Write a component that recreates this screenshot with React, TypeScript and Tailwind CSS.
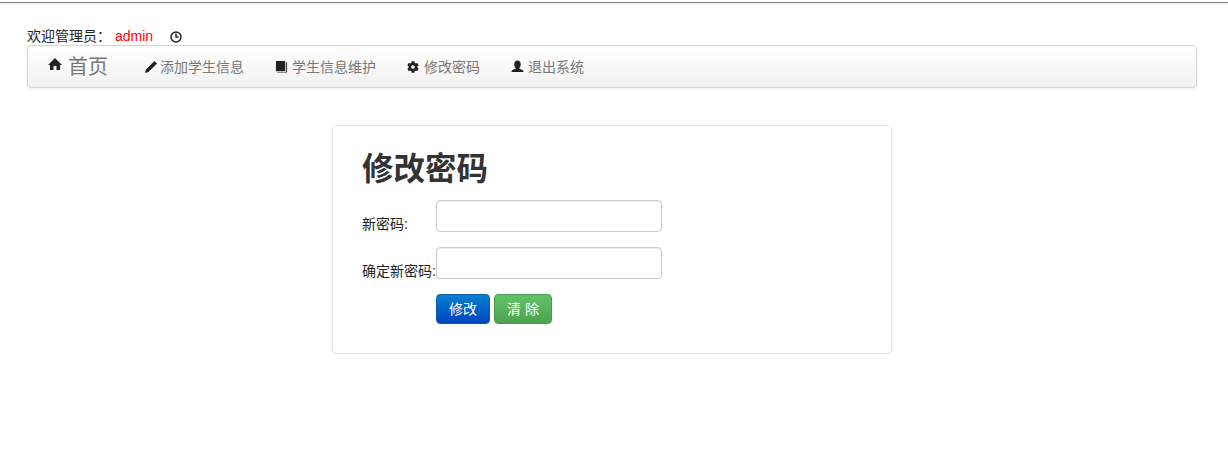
import { Clock3 } from 'lucide-react'
import type { ReactNode } from 'react'
import { FaCog } from 'react-icons/fa'

const font = "[font-family:'Liberation_Sans','Noto_Sans_CJK_SC',sans-serif]"

function Glyph({ d, className }: { d: string; className: string }) {
  return (
    <svg viewBox="0 0 14 14" className={`shrink-0 fill-[#222] ${className}`} aria-hidden>
      <path d={d} />
    </svg>
  )
}

function NavLink({ icon, label, className }: { icon: ReactNode; label: string; className: string }) {
  return (
    <a className={`flex items-center text-[14px] leading-[20px] text-[#777] ${className}`}>
      {icon}
      {label}
    </a>
  )
}

export default function App() {
  return (
    <div className={`h-[465px] overflow-hidden bg-white ${font}`}>
      <div className="mt-[2px] h-[1px] bg-[#777] shadow-[0_2px_0_#f1f1f1]" />
      <div className="pl-[27px] pr-[31px] pt-[25px]">
        <div className="flex h-[17px] items-center text-[14px] leading-[17px] text-[#222]">
          <span>欢迎管理员：</span>
          <span className="ml-[4px] text-[14px] text-[#f00]">admin</span>
          <Clock3 className="ml-[17px] h-[12px] w-[12px] text-[#222]" strokeWidth={3} aria-hidden />
        </div>
        <nav className="flex h-[43px] items-center rounded-[4px] border border-[#d5d5d5] bg-gradient-to-b from-white to-[#f2f2f2] pl-[20px] shadow-[0_1px_3px_rgba(0,0,0,0.08)]">
          <a className="flex items-center gap-[6px] text-[#777]">
            <Glyph className="mb-[6px] h-[14px] w-[14px]" d="M7 1L14 8H12V13H8.5V9H5.5V13H2V8H0Z" />
            <span className="text-[20px] leading-[20px]">首页</span>
          </a>
          <NavLink
            className="ml-[36px]"
            label="添加学生信息"
            icon={<Glyph className="mr-[2px] h-[14px] w-[14px]" d="M10.5 1L13 3.5L4.5 12L1 13L2 9.5Z" />}
          />
          <NavLink
            className="ml-[31px]"
            label="学生信息维护"
            icon={<Glyph className="mr-[4px] h-[13px] w-[13px]" d="M1 1H11V12H1ZM12 2.5H13V13.5H2.5V12.8H12Z" />}
          />
          <NavLink
            className="ml-[31px]"
            label="修改密码"
            icon={<FaCog className="mr-[5px] h-[12px] w-[12px] text-[#222]" aria-hidden />}
          />
          <NavLink
            className="ml-[31px]"
            label="退出系统"
            icon={<Glyph className="mr-[4px] h-[13px] w-[13px]" d="M7 .5C9.5 .5 10.5 2.5 10.5 4.5C10.5 6.5 9.5 8 9 8.5V9.5C11 10.3 13.5 10.5 13.5 13H.5C.5 10.5 3 10.3 5 9.5V8.5C4.5 8 3.5 6.5 3.5 4.5C3.5 2.5 4.5 .5 7 .5Z" />}
          />
        </nav>
        <div className="ml-[305px] mt-[37px] h-[229px] w-[560px] rounded-[5px] border border-[#e5e5e5] pl-[29px] pt-[23px] shadow-[0_1px_2px_rgba(0,0,0,0.05)]">
          <h2 className="text-[31.5px] font-bold leading-[40px] text-[#333]">修改密码</h2>
          <div className="mt-[11px] flex h-[32px] items-end">
            <label className="w-[74px] translate-y-[1px] text-[14px] leading-[18px] text-[#222]">新密码:</label>
            <input className="h-[32px] w-[226px] rounded-[4px] border border-[#ccc] bg-white shadow-[inset_0_1px_1px_rgba(0,0,0,0.075)]" type="password" />
          </div>
          <div className="mt-[15px] flex h-[32px] items-end">
            <label className="w-[74px] translate-y-[1px] whitespace-nowrap text-[14px] leading-[18px] text-[#222]">确定新密码:</label>
            <input className="h-[32px] w-[226px] rounded-[4px] border border-[#ccc] bg-white shadow-[inset_0_1px_1px_rgba(0,0,0,0.075)]" type="password" />
          </div>
          <div className="ml-[74px] mt-[15px] flex gap-[4px]">
            <button className="h-[30px] w-[54px] rounded-[4px] border border-[#0d5cab] bg-gradient-to-b from-[#0f7fd0] to-[#0043c0] text-[14px] text-white">修改</button>
            <button className="h-[30px] w-[58px] rounded-[4px] border border-[#4c9a50] bg-gradient-to-b from-[#62c268] to-[#4da350] text-[14px] text-white">清 除</button>
          </div>
        </div>
      </div>
    </div>
  )
}
